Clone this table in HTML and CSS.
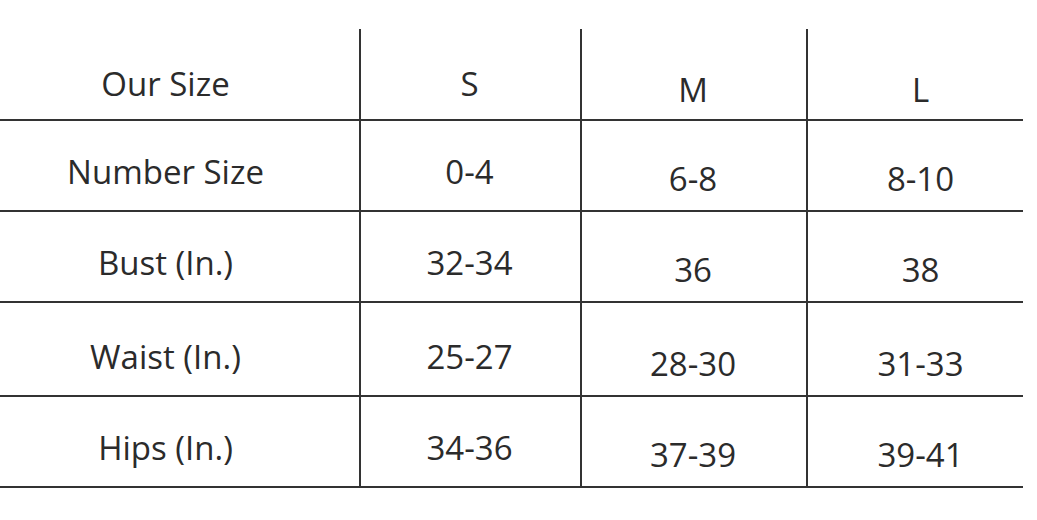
FILE: index.html
```html
<!DOCTYPE html>
<html lang="en">
<head>
<meta charset="utf-8">
<title>Size Chart</title>
<link rel="stylesheet" href="styles.css">
</head>
<body>
<div class="chart">
  <div class="row row-head">
    <div class="cell c1">Our Size</div>
    <div class="cell c2">S</div>
    <div class="cell c3">M</div>
    <div class="cell c4">L</div>
  </div>
  <div class="row">
    <div class="cell c1">Number Size</div>
    <div class="cell c2">0-4</div>
    <div class="cell c3">6-8</div>
    <div class="cell c4">8-10</div>
  </div>
  <div class="row">
    <div class="cell c1">Bust (In.)</div>
    <div class="cell c2">32-34</div>
    <div class="cell c3">36</div>
    <div class="cell c4">38</div>
  </div>
  <div class="row row-tall">
    <div class="cell c1">Waist (In.)</div>
    <div class="cell c2">25-27</div>
    <div class="cell c3">28-30</div>
    <div class="cell c4">31-33</div>
  </div>
  <div class="row">
    <div class="cell c1">Hips (In.)</div>
    <div class="cell c2">34-36</div>
    <div class="cell c3">37-39</div>
    <div class="cell c4">39-41</div>
  </div>
</div>
</body>
</html>
```

FILE: styles.css
```css
html, body {
  margin: 0;
  padding: 0;
  background: #ffffff;
}

body {
  font-family: "Open Sans", "Noto Sans", "DejaVu Sans", sans-serif;
  color: #2b2b2b;
}

.chart {
  width: 1023px;
  padding-top: 29px;
}

.row {
  display: grid;
  grid-template-columns: 359px 221px 226px 217px;
  height: 91px;
  box-sizing: border-box;
  border-bottom: 2px solid #333333;
}

.row-head {
  height: 92px;
}

.row-tall {
  height: 94px;
}

.cell {
  display: flex;
  justify-content: center;
  align-items: flex-end;
  font-size: 33px;
  line-height: 33px;
  padding-bottom: 22px;
  box-sizing: border-box;
}

.c1 {
  padding-right: 28px;
}

.c2, .c3, .c4 {
  border-left: 2px solid #333333;
}

.c2 {
  padding-right: 2px;
}

.c3, .c4 {
  padding-bottom: 15px;
}

.c3 {
  padding-right: 2px;
}

.c4 {
  padding-left: 10px;
}

.row-head .c1,
.row-head .c2 {
  padding-bottom: 19px;
}

.row-head .c3,
.row-head .c4 {
  padding-bottom: 13px;
}
```
